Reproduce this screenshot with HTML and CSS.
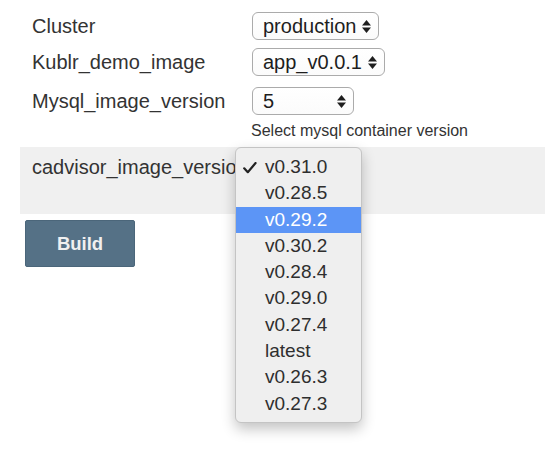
FILE: index.html
```html
<!DOCTYPE html>
<html>
<head>
<meta charset="utf-8">
<link rel="stylesheet" href="styles.css">
</head>
<body>
<div class="page">
  <div class="row r1">
    <div class="label">Cluster</div>
    <div class="select w-prod"><span>production</span>
      <svg class="arr" width="9" height="13" viewBox="0 0 9 13"><polygon points="4.5,0 9,5.6 0,5.6"/><polygon points="0,7.4 9,7.4 4.5,13"/></svg></div>
  </div>
  <div class="row r2">
    <div class="label">Kublr_demo_image</div>
    <div class="select w-app"><span>app_v0.0.1</span>
      <svg class="arr" width="9" height="13" viewBox="0 0 9 13"><polygon points="4.5,0 9,5.6 0,5.6"/><polygon points="0,7.4 9,7.4 4.5,13"/></svg></div>
  </div>
  <div class="row r3">
    <div class="label">Mysql_image_version</div>
    <div class="select w-five"><span>5</span>
      <svg class="arr" width="9" height="13" viewBox="0 0 9 13"><polygon points="4.5,0 9,5.6 0,5.6"/><polygon points="0,7.4 9,7.4 4.5,13"/></svg></div>
  </div>
  <div class="help">Select mysql container version</div>
  <div class="band">
    <div class="row">
      <div class="label">cadvisor_image_version</div>
    </div>
  </div>
  <button class="build">Build</button>

  <div class="menu">
    <div class="item"><svg class="check" width="14" height="12" viewBox="0 0 14 12"><polyline points="1.2,6.3 4.8,10.2 12.6,1" fill="none" stroke="#222" stroke-width="2.2" stroke-linecap="round" stroke-linejoin="round"/></svg>v0.31.0</div>
    <div class="item">v0.28.5</div>
    <div class="item active">v0.29.2</div>
    <div class="item">v0.30.2</div>
    <div class="item">v0.28.4</div>
    <div class="item">v0.29.0</div>
    <div class="item">v0.27.4</div>
    <div class="item">latest</div>
    <div class="item">v0.26.3</div>
    <div class="item">v0.27.3</div>
  </div>
</div>
</body>
</html>
```
FILE: styles.css
```css
html, body {
  margin: 0;
  padding: 0;
  background: #ffffff;
}
body {
  font-family: "Liberation Sans", Arial, Helvetica, sans-serif;
  color: #333333;
  overflow: hidden;
}
.page {
  position: relative;
  padding: 12px 0 0 20px;
  width: 525px;
  height: 454px;
}
.row {
  display: flex;
  align-items: center;
  padding-left: 12px;
  height: 28px;
}
.r2 { margin-top: 8px; }
.r3 { margin-top: 11px; }
.label {
  width: 220px;
  flex: none;
  font-size: 20px;
  line-height: 24px;
  color: #333333;
  white-space: nowrap;
  overflow: hidden;
}
.select {
  box-sizing: border-box;
  height: 28px;
  display: flex;
  align-items: center;
  justify-content: space-between;
  padding: 0 7px 0 10px;
  border: 1px solid #ababab;
  border-radius: 6px;
  background: linear-gradient(#ffffff, #fbfbfb);
  font-size: 20px;
  color: #1e1e1e;
}
.select span { line-height: 24px; }
.arr { fill: #1e1e1e; flex: none; }
.w-prod { width: 127px; }
.w-app { width: 133px; }
.w-five { width: 102px; }
.help {
  margin: 6px 0 0 231px;
  font-size: 16px;
  line-height: 20px;
  color: #333333;
}
.band {
  margin-top: 6px;
  background: #f0f0f0;
  height: 67px;
  box-sizing: border-box;
  padding-top: 6px;
}
.band .label { width: 203px; }
.build {
  display: block;
  margin: 6px 0 0 5px;
  width: 110px;
  height: 47px;
  border: 1px solid #4b667a;
  border-radius: 2px;
  background: #557186;
  color: #f0f0f0;
  font-family: "Liberation Sans", Arial, sans-serif;
  font-weight: bold;
  font-size: 18.5px;
  padding: 0;
}
.menu {
  position: absolute;
  left: 235px;
  top: 147px;
  width: 127px;
  box-sizing: border-box;
  padding: 6px 0 5px;
  background: #efefef;
  border: 1px solid #c4c4c4;
  border-radius: 6px;
  box-shadow: 0 6px 14px rgba(0, 0, 0, 0.24);
}
.item {
  position: relative;
  height: 26.3px;
  line-height: 26.3px;
  padding-left: 29px;
  font-size: 19px;
  color: #2e2e2e;
  white-space: nowrap;
}
.item.active {
  background: #5c95f6;
  color: #ffffff;
}
.check {
  position: absolute;
  left: 7px;
  top: 8px;
}
```
